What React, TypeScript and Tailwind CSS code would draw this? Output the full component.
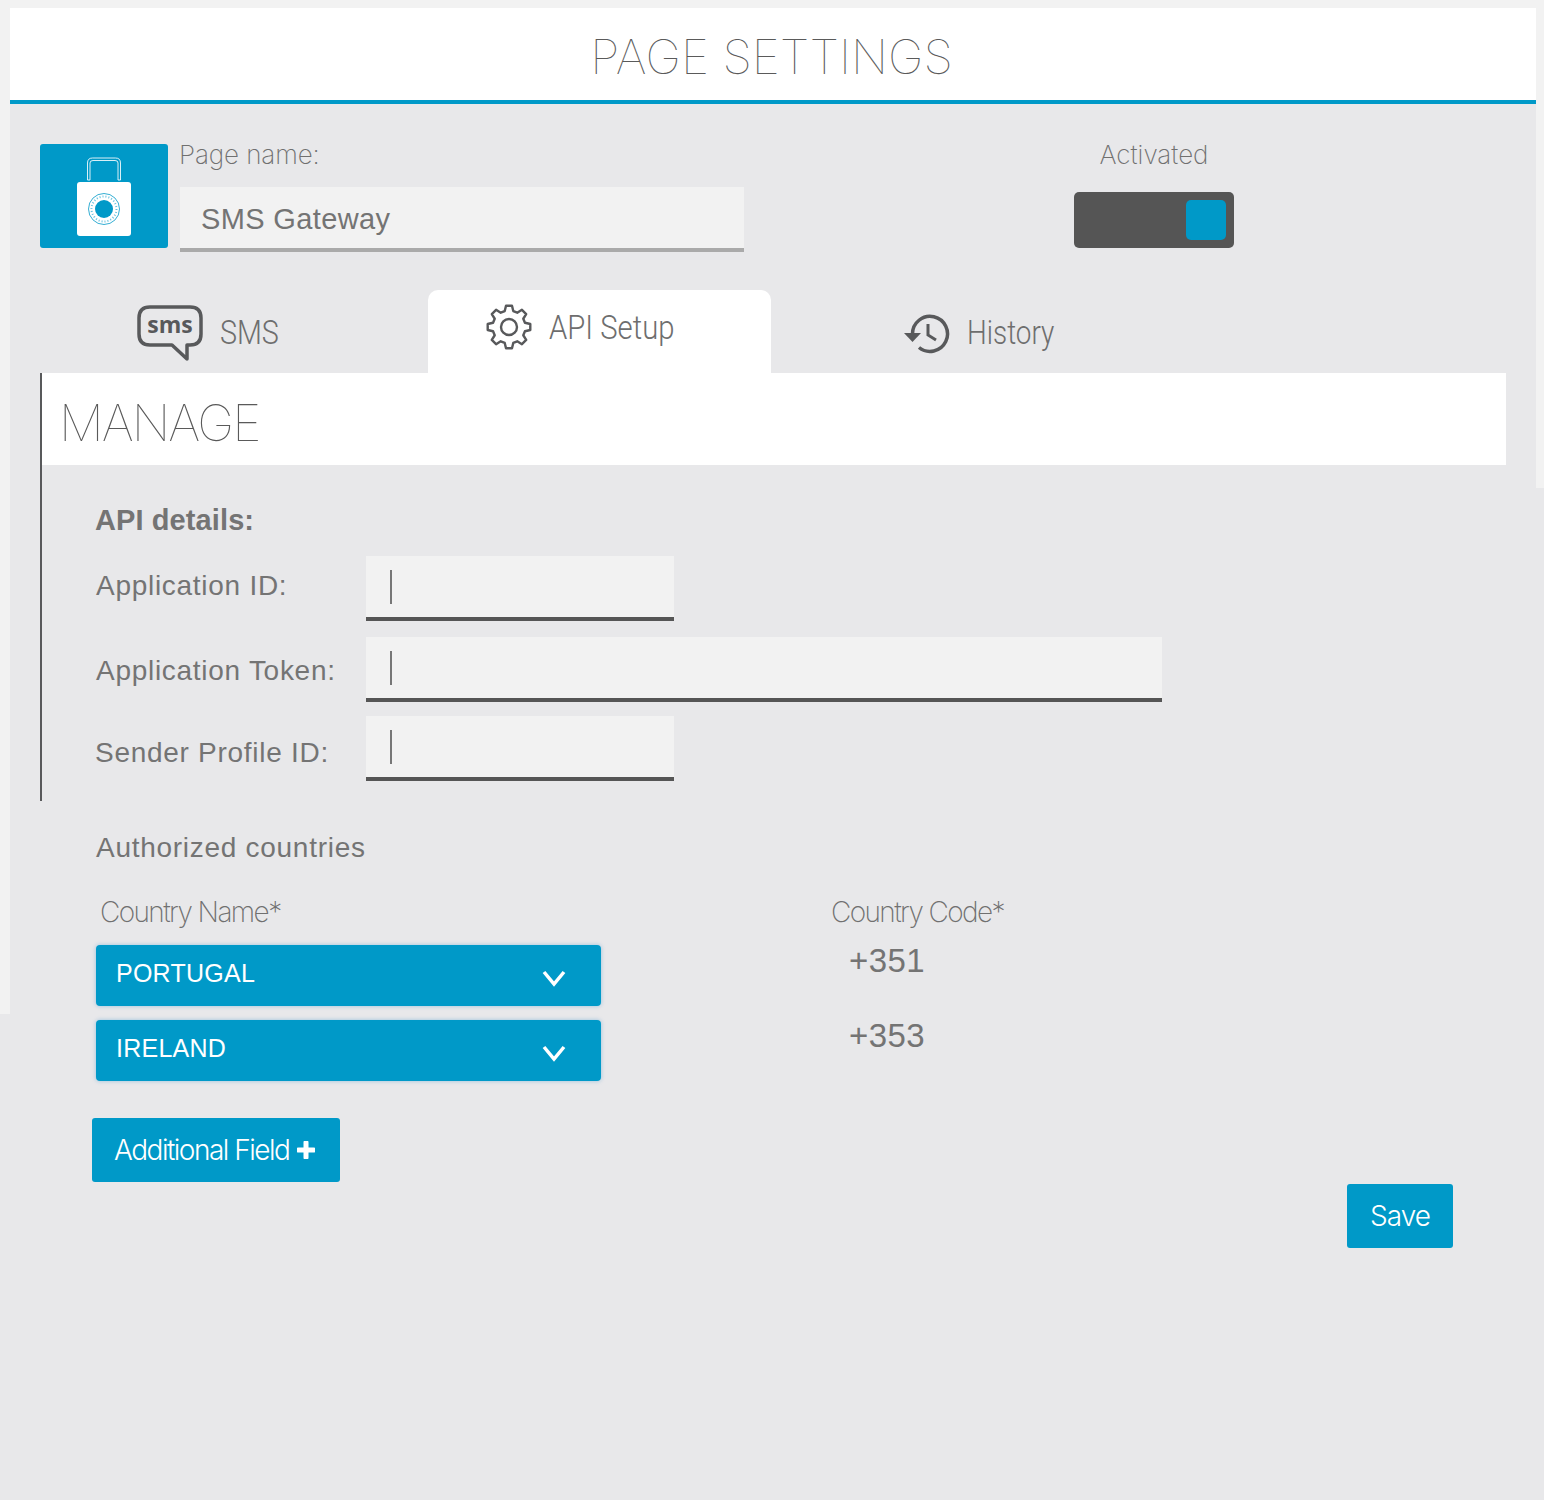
const GRAY = "#58595b";

// ─── Icons ────────────────────────────────────────────────────
function LockIcon() {
  return (
    <svg width="56" height="84" viewBox="0 0 56 84" fill="none">
      <path
        d="M11.5 24 V7 Q11.5 2 16.5 2 H39.5 Q44.5 2 44.5 7 V24 H42 V7 Q42 4.500 39 4.500 H17 Q14 4.500 14 7 V24 Z"
        stroke="#fff"
        strokeOpacity="0.85"
        strokeWidth="1"
      />
      <rect x="1" y="26" width="54" height="54" rx="3" fill="#fff" />
      <circle cx="28" cy="53" r="15.500" stroke="#0099c8" strokeWidth="0.8" />
      <circle cx="28" cy="53" r="12.500" stroke="#0099c8" strokeWidth="2" strokeDasharray="1 2" strokeOpacity="0.6" />
      <circle cx="28" cy="53" r="9" fill="#0099c8" />
    </svg>
  );
}

function SmsIcon() {
  return (
    <svg width="66" height="58" viewBox="0 0 66 58" fill="none">
      <path
        d="M13 2 H53 Q64 2 64 13 V29 Q64 40 53 40 H50 V54 L35 40 H13 Q2 40 2 29 V13 Q2 2 13 2 Z"
        stroke={GRAY}
        strokeWidth="3.500"
        strokeLinejoin="round"
      />
      <text x="33" y="28" textAnchor="middle" fill={GRAY} className="font-['Open_Sans',sans-serif] font-bold text-[23px]">
        sms
      </text>
    </svg>
  );
}

function GearIcon() {
  const pt = (deg: number, r: number) => {
    const a = (deg * Math.PI) / 180;
    return `${(23 + r * Math.sin(a)).toFixed(2)} ${(23 - r * Math.cos(a)).toFixed(2)}`;
  };
  let d = "";
  for (let i = 0; i < 8; i++) {
    const a = i * 45;
    d += `${i === 0 ? "M" : "L"}${pt(a - 15, 16.5)} L${pt(a - 8, 21.5)} L${pt(a + 8, 21.5)} L${pt(a + 15, 16.5)} `;
  }
  return (
    <svg width="46" height="46" viewBox="0 0 46 46" fill="none" stroke={GRAY} strokeWidth="2.400" strokeLinejoin="round">
      <path d={d + "Z"} />
      <circle cx="23" cy="23" r="8" />
    </svg>
  );
}

function HistoryIcon() {
  return (
    <svg width="46" height="42" viewBox="0 0 46 42" fill="none">
      <path d="M8.500 21 A17.500 17.500 0 1 1 15 34.500" stroke={GRAY} strokeWidth="3.500" />
      <path d="M0 20 H17 L8.500 29 Z" fill={GRAY} />
      <path d="M24 11 V22 L32 27" stroke={GRAY} strokeWidth="3" />
    </svg>
  );
}

function Chevron() {
  return (
    <svg width="24" height="18" viewBox="0 0 24 18" fill="none">
      <path d="M2 3 L12 15 L22 3" stroke="#fff" strokeWidth="3.500" />
    </svg>
  );
}

function PlusIcon() {
  return (
    <svg width="18" height="18" viewBox="0 0 18 18" fill="none">
      <path d="M9 1.500 V16.500 M1.500 9 H16.500" stroke="#fff" strokeWidth="5" strokeLinecap="round" />
    </svg>
  );
}

// ─── Small pieces ─────────────────────────────────────────────
function Field({ label, width, className, labelClass }: { label: string; width: string; className: string; labelClass: string }) {
  return (
    <div className={`flex items-start ${className}`}>
      <label className={`w-[271px] shrink-0 text-[28px] leading-[34px] tracking-[0.72px] text-[#747474] ${labelClass}`}>{label}</label>
      <div className={`${width} h-[65px] bg-[#f2f2f2] border-b-[4px] border-[#555555] flex items-center pl-6`}>
        <span className="w-[2px] h-[34px] bg-[#777777]" />
      </div>
    </div>
  );
}

function CountryRow({ name, code, className }: { name: string; code: string; className: string }) {
  return (
    <div className={`flex items-start ${className}`}>
      <div className="w-[505px] h-[61px] bg-[#0099c8] rounded-[4px] shadow-[0_0_4px_rgba(0,120,200,0.35)] flex items-center justify-between pl-5 pr-[35px] text-white text-[25px] tracking-[0.25px]">
        <span className="-mt-1">{name}</span>
        <span className="mt-1">
          <Chevron />
        </span>
      </div>
      <span className="ml-[248px] -mt-[3px] text-[33px] leading-[38px] tracking-[0.4px] text-[#747474]">{code}</span>
    </div>
  );
}

// ─── App ──────────────────────────────────────────────────────
export default function App() {
  return (
    <div className="w-[1544px] h-[1500px] bg-[#e8e8ea] font-['Liberation_Sans',Arial,sans-serif] overflow-hidden">
      <div className="h-2 bg-[#f2f2f2]" />
      <div className="flex items-start">
        <div className="w-[10px] h-[1006px] bg-[#f2f2f2] shrink-0" />
        <main className="w-[1526px] shrink-0">
          <header className="h-[96px] bg-white border-b-[4px] border-[#0099c8] flex items-center justify-center pt-[6px]">
            <h1 className="font-['Inter',sans-serif] font-thin text-[48px] text-[#5a5a5a] -ml-[3px]">PAGE SETTINGS</h1>
          </header>

          <section className="flex items-start pl-[30px] pt-[40px]">
            <div className="w-[128px] h-[104px] bg-[#0099c8] rounded-[3px] flex justify-center pt-3">
              <LockIcon />
            </div>
            <div className="ml-3 w-[564px] -mt-[7px]">
              <div className="font-['Inter',sans-serif] font-extralight text-[26px] leading-[36px] tracking-[-0.1px] text-[#707070] -ml-px">Page name:</div>
              <div className="mt-[14px] h-[65px] bg-[#f2f2f2] border-b-[4px] border-[#aaaaaa] flex items-center pl-[21px] pt-1 text-[29px] tracking-[0.36px] text-[#747474]">
                SMS Gateway
              </div>
            </div>
            <div className="ml-[330px] w-[160px] -mt-[7px] flex flex-col items-center">
              <div className="font-['Inter',sans-serif] font-extralight text-[26px] leading-[36px] text-[#707070]">Activated</div>
              <div className="mt-[19px] w-[160px] h-[56px] bg-[#555555] rounded-[5px] flex items-center justify-end pr-2">
                <span className="w-10 h-10 bg-[#0099c8] rounded-[5px]" />
              </div>
            </div>
          </section>

          <nav className="flex items-end ml-[30px] mt-[38px] h-[83px]">
            <div className="w-[388px] h-[83px] flex items-center pl-[97px] gap-[17px]">
              <span className="flex mt-1">
                <SmsIcon />
              </span>
              <span className="origin-left scale-x-[0.87] font-['Roboto',sans-serif] font-light text-[33px] text-[#6e6e6e] mt-[2px]">SMS</span>
            </div>
            <div className="w-[343px] h-[83px] bg-white rounded-t-[10px] flex items-center pl-[58px] gap-[17px] pb-2">
              <span className="flex -mt-[2px]">
                <GearIcon />
              </span>
              <span className="origin-left scale-x-[0.887] font-['Roboto',sans-serif] font-light text-[33px] text-[#6e6e6e]">API Setup</span>
            </div>
            <div className="h-[83px] flex items-center pl-[133px] gap-[17px]">
              <span className="flex mt-1">
                <HistoryIcon />
              </span>
              <span className="origin-left scale-x-[0.845] font-['Roboto',sans-serif] font-light text-[33px] text-[#6e6e6e] mt-[2px]">History</span>
            </div>
          </nav>

          <div className="ml-[30px] w-[1466px] border-l-2 border-[#58595b] h-[428px]">
            <div className="h-[92px] bg-white flex items-center pl-[17px] pt-2">
              <h2 className="font-['Inter',sans-serif] font-thin text-[50px] text-[#5a5a5a] tracking-[-2px]">MANAGE</h2>
            </div>
            <div className="pl-[53px] pt-[37px]">
              <h3 className="font-bold text-[29px] leading-[36px] tracking-[0.1px] text-[#747474]">API details:</h3>
              <Field label="Application ID:" width="w-[308px]" className="mt-[18px]" labelClass="pl-px pt-[13px]" />
              <Field label="Application Token:" width="w-[796px]" className="mt-4" labelClass="pl-px pt-[17px]" />
              <Field label="Sender Profile ID:" width="w-[308px]" className="mt-[14px]" labelClass="pt-5" />
            </div>
          </div>

          <section className="pl-[86px]">
            <h3 className="mt-[30px] text-[28px] leading-[34px] tracking-[0.72px] text-[#747474]">Authorized countries</h3>
            <div className="mt-[29px] flex font-['Inter',sans-serif] font-extralight text-[28px] leading-[36px] tracking-[-1.6px] text-[#707070]">
              <span className="w-[735px] pl-1">Country Name*</span>
              <span>Country Code*</span>
            </div>
            <CountryRow name="PORTUGAL" code="+351" className="mt-[15px]" />
            <CountryRow name="IRELAND" code="+353" className="mt-[14px]" />
            <button className="mt-[37px] -ml-1 w-[248px] h-16 bg-[#0099c8] rounded-[3px] flex items-center pl-[22px] gap-2 font-['Inter',sans-serif] font-light text-[28px] tracking-[-1.5px] text-white">
              Additional Field
              <PlusIcon />
            </button>
            <button className="mt-[2px] ml-[1251px] w-[106px] h-16 bg-[#0099c8] rounded-[3px] flex items-center justify-center font-['Inter',sans-serif] font-light text-[28px] tracking-[-1px] text-white">
              Save
            </button>
          </section>
        </main>
        <div className="w-2 h-[480px] bg-[#f2f2f2] shrink-0" />
      </div>
    </div>
  );
}
